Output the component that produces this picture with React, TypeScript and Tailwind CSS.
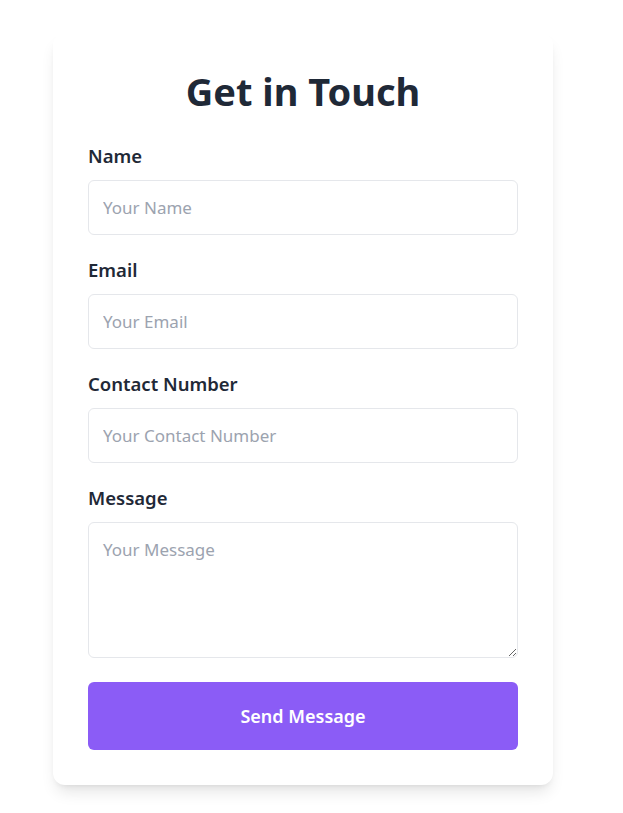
import React from 'react';

const fields = [
  { id: 'name', label: 'Name', placeholder: 'Your Name', type: 'text' },
  { id: 'email', label: 'Email', placeholder: 'Your Email', type: 'email' },
  { id: 'phone', label: 'Contact Number', placeholder: 'Your Contact Number', type: 'tel' },
];

const App: React.FC = () => {
  return (
    <div className="min-h-screen bg-white flex justify-center pt-[33px] pr-[17px] font-['Noto_Sans',sans-serif]">
      <form
        className="w-[500px] self-start bg-white rounded-xl shadow-lg px-[35px] pt-[34px] pb-[35px]"
        onSubmit={(e) => e.preventDefault()}
      >
        <h1 className="text-[38px] leading-[48px] font-bold text-[#1f2937] text-center mb-[27px]">
          Get in Touch
        </h1>
        {fields.map((f) => (
          <div key={f.id} className="mb-[21px]">
            <label htmlFor={f.id} className="block text-[18.5px] leading-7 font-semibold text-[#1f2937] mb-[10px]">
              {f.label}
            </label>
            <input
              id={f.id}
              type={f.type}
              placeholder={f.placeholder}
              className="block w-full h-[55px] px-[14px] border border-[#e5e7eb] rounded-md text-[17px] text-[#1f2937] placeholder:text-[#9ca3af] outline-none"
            />
          </div>
        ))}
        <div className="mb-[24px]">
          <label htmlFor="message" className="block text-[18.5px] leading-7 font-semibold text-[#1f2937] mb-[10px]">
            Message
          </label>
          <textarea
            id="message"
            placeholder="Your Message"
            className="block w-full h-[136px] px-[14px] py-[14px] border border-[#e5e7eb] rounded-md text-[17px] text-[#1f2937] placeholder:text-[#9ca3af] outline-none"
          />
        </div>
        <button
          type="submit"
          className="block w-full h-[68px] bg-[#8b5cf6] text-white text-lg font-semibold rounded-md"
        >
          Send Message
        </button>
      </form>
    </div>
  );
};

export default App;
